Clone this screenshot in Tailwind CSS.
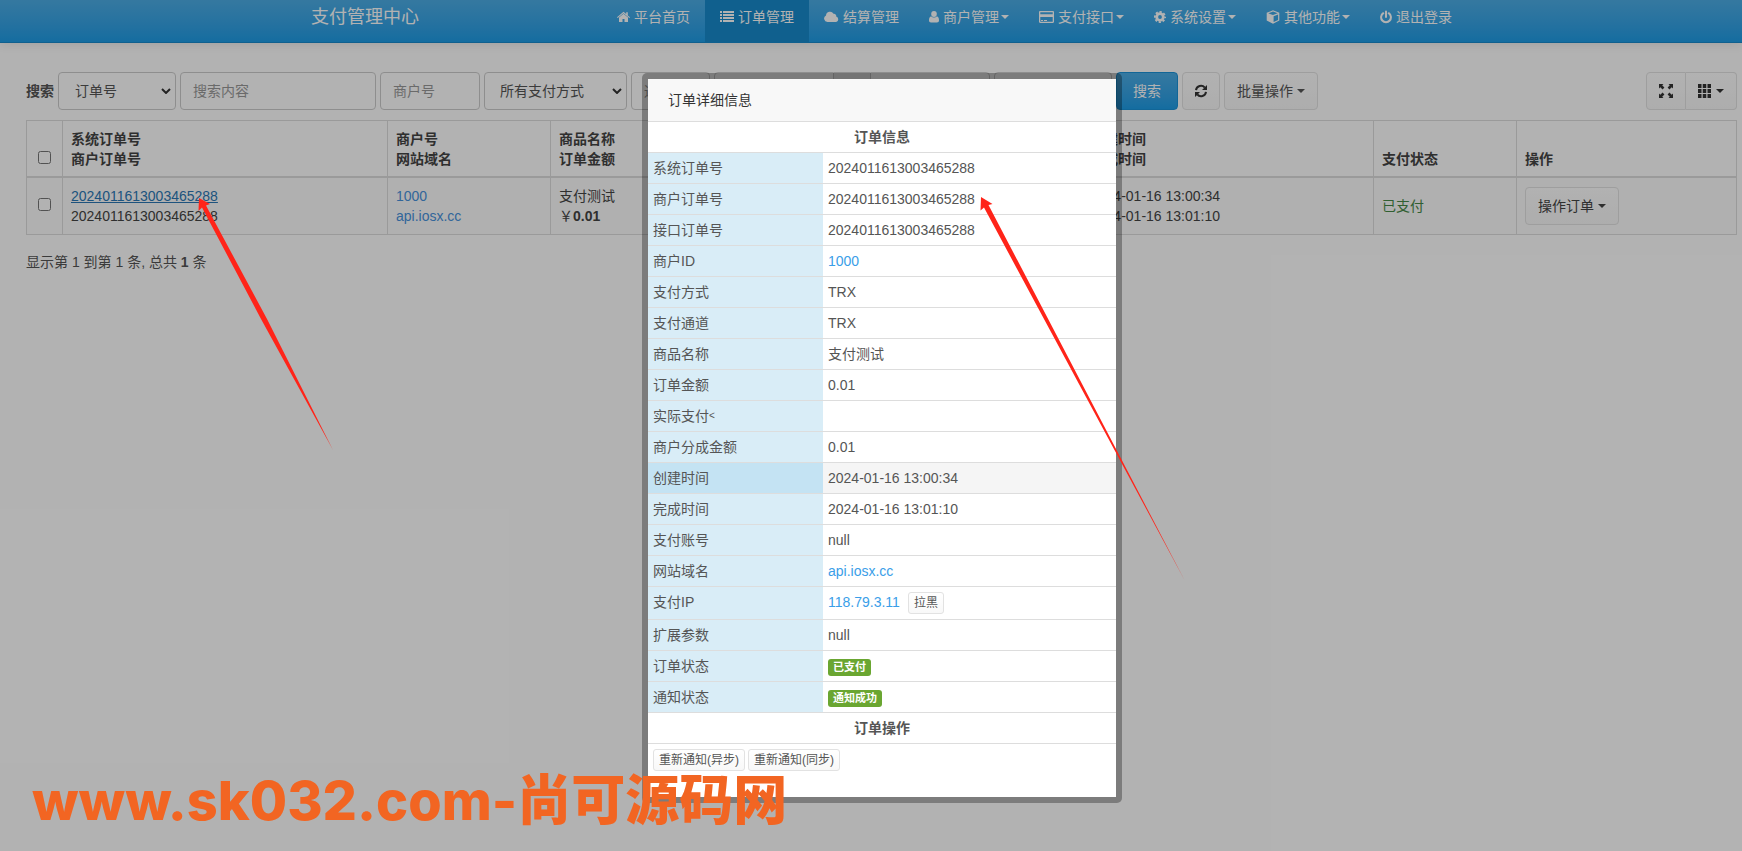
<!DOCTYPE html>
<html lang="zh-CN">
<head>
<meta charset="utf-8">
<meta name="viewport" content="width=device-width, initial-scale=1">
<title>支付管理中心</title>
<script src="https://cdn.jsdelivr.net/npm/@tailwindcss/browser@4"></script>
</head>
<body class="relative min-h-screen overflow-hidden bg-white font-['Liberation_Sans','Noto_Sans_CJK_SC',sans-serif] text-sm leading-5 text-[#555]">

<svg class="hidden" aria-hidden="true">
  <symbol id="caret" viewBox="0 0 8 4"><path d="M0 0h8L4 4z"/></symbol>
  <symbol id="chevron" viewBox="0 0 10 6"><path d="M1 1l4 4 4-4" fill="none" stroke="currentColor" stroke-width="2"/></symbol>
</svg>

<!-- Navigation bar -->
<header class="h-[43px] border-b border-[#178acc] bg-linear-to-b from-[#4cade6] to-[#1d9ce5] shadow-[0_1px_10px_rgba(0,0,0,0.1)]">
  <div class="mx-auto flex h-[42px] w-full max-w-[1192px] justify-between pl-9 text-white">
    <a href="#" class="pt-[7px] text-lg leading-5">支付管理中心</a>
    <nav class="flex whitespace-nowrap">
      <a href="#" class="flex h-[42px] items-center gap-1 px-[15px] pb-2"><svg class="h-3.5 w-[13px]" viewBox="0 0 13 14" fill="currentColor"><path d="M6.500 3.800L2 7.500V12h3.500V9h2v3H11V7.500z"/><path d="M6.500 1.800L9.200 4V2.300h1.600v3.100L13 7.200l-.7.800L6.500 3.200.7 8 0 7.200z"/></svg>平台首页</a>
      <a href="#" aria-current="page" class="flex h-[43px] items-center gap-1 bg-[#178acc] px-[15px] pb-[9px]"><svg class="h-3.5 w-3.5" viewBox="0 0 14 14" fill="currentColor"><path d="M0 1h2v2H0zM3 1h11v2H3zM0 4h2v2H0zM3 4h11v2H3zM0 7h2v2H0zM3 7h11v2H3zM0 10h2v2H0zM3 10h11v2H3z"/></svg>订单管理</a>
      <a href="#" class="flex h-[42px] items-center gap-1 px-[15px] pb-2"><svg class="h-3.5 w-[15px]" viewBox="0 0 15 14" fill="currentColor"><path d="M3.500 12A3.500 3.500 0 0 1 2 5.400 4 4 0 0 1 9.500 3.800 2.300 2.300 0 0 1 12.200 6.600 2.800 2.800 0 0 1 12.200 12z"/></svg>结算管理</a>
      <a href="#" class="flex h-[42px] items-center gap-1 px-[15px] pb-2"><svg class="h-3.5 w-2.5" viewBox="0 0 10 14" fill="currentColor"><ellipse cx="5" cy="4" rx="2.800" ry="3"/><path d="M2 6.200C.5 6.800 0 8.500 0 10.500 0 11.500.8 12.500 2 12.500h6c1.200 0 2-1 2-2 0-2-.5-3.700-2-4.300a4 4 0 0 1-6 0z"/></svg>商户管理<svg class="-ml-0.5 h-1 w-2" fill="currentColor"><use href="#caret"/></svg></a>
      <a href="#" class="flex h-[42px] items-center gap-1 px-[15px] pb-2"><svg class="h-3.5 w-[15px]" viewBox="0 0 15 14" fill="currentColor"><path fill-rule="evenodd" d="M1.200 1h12.600c.7 0 1.200.5 1.200 1.200v9.600c0 .7-.5 1.200-1.200 1.200H1.200C.5 13 0 12.500 0 11.800V2.200C0 1.500.5 1 1.200 1zM1.300 2.200v2.100h12.400V2.200zM1.300 7v4.800h12.400V7zM2 10h2v1H2zM5 10h3v1H5z"/></svg>支付接口<svg class="-ml-0.5 h-1 w-2" fill="currentColor"><use href="#caret"/></svg></a>
      <a href="#" class="flex h-[42px] items-center gap-1 px-[15px] pb-2"><svg class="h-3.5 w-3" viewBox="0 0 12 14"><circle cx="6" cy="7" r="3.300" fill="none" stroke="currentColor" stroke-width="2.800"/><circle cx="6" cy="7" r="5.100" fill="none" stroke="currentColor" stroke-width="1.800" stroke-dasharray="2.200 1.805" stroke-dashoffset="1.100"/></svg>系统设置<svg class="-ml-0.5 h-1 w-2" fill="currentColor"><use href="#caret"/></svg></a>
      <a href="#" class="flex h-[42px] items-center gap-1 px-[15px] pb-2"><svg class="h-3.5 w-3.5" viewBox="0 0 14 14" fill="currentColor"><path fill-rule="evenodd" d="M7 .3l6.300 2.500v7.700L7 13.700.7 10.500V2.800zM7 1.500L2.300 3.300 7 5.100l4.700-1.800zM7.600 6.200v5.900l4.500-2.200V4.500z"/></svg>其他功能<svg class="-ml-0.5 h-1 w-2" fill="currentColor"><use href="#caret"/></svg></a>
      <a href="#" class="flex h-[42px] items-center gap-1 px-[15px] pb-2"><svg class="h-3.5 w-3" viewBox="0 0 12 14" fill="none" stroke="currentColor" stroke-width="2" stroke-linecap="round"><path d="M3.300 3.200a4.900 4.900 0 1 0 5.400 0M6 1.500v5.500"/></svg>退出登录</a>
    </nav>
  </div>
</header>

<main class="px-[5px] pt-[29px] pl-[26px]">
  <!-- Search toolbar -->
  <form class="flex items-center gap-1 whitespace-nowrap">
    <label for="field" class="font-bold">搜索</label>
    <div class="relative w-[118px] shrink-0">
      <select id="field" class="h-[38px] w-full appearance-none rounded border border-[#ccc] bg-white px-4"><option>订单号</option></select>
      <svg class="pointer-events-none absolute top-4 right-[5px] h-1.5 w-2.5 text-[#333]"><use href="#chevron"/></svg>
    </div>
    <input type="text" aria-label="搜索内容" placeholder="搜索内容" class="h-[38px] w-[196px] shrink-0 rounded border border-[#ccc] bg-white px-3 placeholder:text-[#999]">
    <input type="text" aria-label="商户号" placeholder="商户号" class="h-[38px] w-[100px] shrink-0 rounded border border-[#ccc] bg-white px-3 placeholder:text-[#999]">
    <div class="relative w-[143px] shrink-0">
      <select aria-label="支付方式" class="h-[38px] w-full appearance-none rounded border border-[#ccc] bg-white px-[15px]"><option>所有支付方式</option></select>
      <svg class="pointer-events-none absolute top-4 right-[5px] h-1.5 w-2.5 text-[#333]"><use href="#chevron"/></svg>
    </div>
    <input type="text" aria-label="通道ID" placeholder="通道ID" class="h-[38px] w-[79px] shrink-0 rounded border border-[#ccc] bg-white px-3 placeholder:text-[#999]">
    <div class="flex w-[276px] shrink-0">
      <input type="text" aria-label="开始日期" class="h-[38px] min-w-0 flex-1 rounded-l border border-[#ccc] bg-white px-3">
      <span class="w-9 border-y border-[#ccc] bg-[#eee]"></span>
      <input type="text" aria-label="结束日期" class="h-[38px] min-w-0 flex-1 rounded-r border border-[#ccc] bg-white px-3">
    </div>
    <select aria-label="支付状态" class="h-[38px] w-[118px] shrink-0 appearance-none rounded border border-[#ccc] bg-white"></select>
    <button type="button" class="h-[38px] w-[62px] shrink-0 rounded border border-[#1b92d8] bg-linear-to-b from-[#4cade6] to-[#1d9ce5] text-white">搜索</button>
    <button type="button" aria-label="刷新" class="flex h-[38px] w-[38px] shrink-0 items-center justify-center rounded border border-[#e2e2e2] bg-linear-to-b from-white to-[#f8f8f8]"><svg class="h-3.5 w-3.5 text-[#333]" viewBox="0 0 14 14"><path d="M2 6.200A5 5 0 0 1 10.800 3.600M12 7.800A5 5 0 0 1 3.200 10.400" fill="none" stroke="currentColor" stroke-width="2"/><path d="M13 1v5H8zM1 13V8h5z" fill="currentColor"/></svg></button>
    <button type="button" class="flex h-[38px] w-[94px] shrink-0 items-center justify-center gap-1 rounded border border-[#e2e2e2] bg-linear-to-b from-white to-[#f8f8f8]">批量操作<svg class="h-1 w-2" fill="currentColor"><use href="#caret"/></svg></button>
    <div class="ml-auto flex">
      <button type="button" aria-label="全屏" class="flex h-[38px] w-10 items-center justify-center rounded-l border border-[#e2e2e2] bg-linear-to-b from-white to-[#f8f8f8] text-[#333]"><svg class="h-3.5 w-3.5" viewBox="0 0 14 14" fill="currentColor"><path d="M0 0h4.500L3.200 1.300l2.200 2.300-1.800 1.800L1.300 3.200 0 4.500zM14 0v4.500l-1.300-1.300-2.300 2.200-1.800-1.800 2.200-2.300L9.500 0zM0 14V9.500l1.300 1.300 2.300-2.200 1.800 1.800-2.200 2.300L4.500 14zM14 14H9.500l1.300-1.300-2.200-2.300 1.800-1.800 2.300 2.200L14 9.500z"/></svg></button>
      <button type="button" aria-label="列" class="flex h-[38px] w-[51px] items-center justify-center gap-[5px] rounded-r border border-l-0 border-[#e2e2e2] bg-linear-to-b from-white to-[#f8f8f8] text-[#333]"><svg class="h-3.5 w-[13px]" viewBox="0 0 13 14" fill="currentColor"><path d="M0 0h3.500v4H0zM4.750 0h3.500v4h-3.500zM9.500 0H13v4H9.500zM0 5h3.500v4H0zM4.750 5h3.500v4h-3.500zM9.500 5H13v4H9.500zM0 10h3.500v4H0zM4.750 10h3.500v4h-3.500zM9.500 10H13v4H9.500z"/></svg><svg class="h-1 w-2" fill="currentColor"><use href="#caret"/></svg></button>
    </div>
  </form>

  <!-- Order list -->
  <table class="mt-2.5 w-full table-fixed border-collapse text-left whitespace-nowrap text-[#444]">
    <colgroup><col class="w-9"><col class="w-[325px]"><col class="w-[163px]"><col class="w-[150px]"><col><col class="w-[292px]"><col class="w-[143px]"><col class="w-[220px]"></colgroup>
    <thead>
      <tr class="border-t border-b-2 border-[#ddd] align-bottom">
        <th class="border-x border-[#ddd] px-2 pt-2 pb-3"><input type="checkbox" aria-label="全选" class="ml-[3px] block size-[13px]"></th>
        <th class="border-x border-[#ddd] px-2 pt-2 pb-[7px]">系统订单号<br>商户订单号</th>
        <th class="border-x border-[#ddd] px-2 pt-2 pb-[7px]">商户号<br>网站域名</th>
        <th class="border-x border-[#ddd] px-2 pt-2 pb-[7px]">商品名称<br>订单金额</th>
        <th class="border-x border-[#ddd] px-2 pt-2 pb-[7px]"></th>
        <th class="border-x border-[#ddd] px-2 pt-2 pb-[7px]">创建时间<br>完成时间</th>
        <th class="border-x border-[#ddd] px-2 pt-2 pb-[7px]">支付状态</th>
        <th class="border-x border-[#ddd] px-2 pt-2 pb-[7px]">操作</th>
      </tr>
    </thead>
    <tbody>
      <tr class="border-b border-[#ddd] bg-[#fcfcfc]">
        <td class="border-x border-[#ddd] px-2 pt-2 pb-3"><input type="checkbox" aria-label="选择订单" class="ml-[3px] block size-[13px]"></td>
        <td class="border-x border-[#ddd] p-2"><a href="#" class="text-[#2b78b5] underline">2024011613003465288</a><br>2024011613003465288</td>
        <td class="border-x border-[#ddd] p-2"><a href="#" class="text-[#4892dd]">1000</a><br><a href="#" class="text-[#4892dd]">api.iosx.cc</a></td>
        <td class="border-x border-[#ddd] p-2">支付测试<br>￥<b>0.01</b></td>
        <td class="border-x border-[#ddd] p-2"></td>
        <td class="border-x border-[#ddd] p-2">2024-01-16 13:00:34<br>2024-01-16 13:01:10</td>
        <td class="border-x border-[#ddd] p-2 text-[#468847]">已支付</td>
        <td class="border-x border-[#ddd] px-2 py-0"><button type="button" class="flex h-[38px] w-[94px] items-center justify-center gap-1 rounded border border-[#e2e2e2] bg-linear-to-b from-white to-[#f8f8f8]">操作订单<svg class="h-1 w-2" fill="currentColor"><use href="#caret"/></svg></button></td>
      </tr>
    </tbody>
  </table>
  <p class="mt-[17px]">显示第 1 到第 1 条, 总共 <b>1</b> 条</p>
</main>

<div class="absolute inset-0 bg-black/30"></div>

<!-- Order details dialog -->
<section role="dialog" aria-labelledby="dialog-title" class="absolute top-[73px] left-[642px] w-[480px] rounded-[5px] bg-black/30 p-1.5">
  <div class="bg-white pb-[21px]">
    <h2 id="dialog-title" class="h-[42px] bg-[#f8f8f8] px-5 leading-[42px] text-[#333]">订单详细信息</h2>
    <table class="w-full table-fixed border-collapse">
      <colgroup><col class="w-[175px]"><col></colgroup>
      <tbody>
        <tr><th colspan="2" class="border-t border-[#ddd] p-[5px] font-bold">订单信息</th></tr>
        <tr><td class="border-t border-[#ddd] bg-[#d9edf7] p-[5px]">系统订单号</td><td class="border-t border-[#ddd] p-[5px]">2024011613003465288</td></tr>
        <tr><td class="border-t border-[#ddd] bg-[#d9edf7] p-[5px]">商户订单号</td><td class="border-t border-[#ddd] p-[5px]">2024011613003465288</td></tr>
        <tr><td class="border-t border-[#ddd] bg-[#d9edf7] p-[5px]">接口订单号</td><td class="border-t border-[#ddd] p-[5px]">2024011613003465288</td></tr>
        <tr><td class="border-t border-[#ddd] bg-[#d9edf7] p-[5px]">商户ID</td><td class="border-t border-[#ddd] p-[5px]"><a href="#" class="text-[#3a9ee8]">1000</a></td></tr>
        <tr><td class="border-t border-[#ddd] bg-[#d9edf7] p-[5px]">支付方式</td><td class="border-t border-[#ddd] p-[5px]">TRX</td></tr>
        <tr><td class="border-t border-[#ddd] bg-[#d9edf7] p-[5px]">支付通道</td><td class="border-t border-[#ddd] p-[5px]">TRX</td></tr>
        <tr><td class="border-t border-[#ddd] bg-[#d9edf7] p-[5px]">商品名称</td><td class="border-t border-[#ddd] p-[5px]">支付测试</td></tr>
        <tr><td class="border-t border-[#ddd] bg-[#d9edf7] p-[5px]">订单金额</td><td class="border-t border-[#ddd] p-[5px]">0.01</td></tr>
        <tr><td class="border-t border-[#ddd] bg-[#d9edf7] p-[5px]">实际支付<span class="align-[2px] text-[10px] leading-none">&lt;</span></td><td class="border-t border-[#ddd] p-[5px]"></td></tr>
        <tr><td class="border-t border-[#ddd] bg-[#d9edf7] p-[5px]">商户分成金额</td><td class="border-t border-[#ddd] p-[5px]">0.01</td></tr>
        <tr><td class="border-t border-[#ddd] bg-[#c4e3f3] p-[5px]">创建时间</td><td class="border-t border-[#ddd] bg-[#f5f5f5] p-[5px]">2024-01-16 13:00:34</td></tr>
        <tr><td class="border-t border-[#ddd] bg-[#d9edf7] p-[5px]">完成时间</td><td class="border-t border-[#ddd] p-[5px]">2024-01-16 13:01:10</td></tr>
        <tr><td class="border-t border-[#ddd] bg-[#d9edf7] p-[5px]">支付账号</td><td class="border-t border-[#ddd] p-[5px]">null</td></tr>
        <tr><td class="border-t border-[#ddd] bg-[#d9edf7] p-[5px]">网站域名</td><td class="border-t border-[#ddd] p-[5px]"><a href="#" class="text-[#3a9ee8]">api.iosx.cc</a></td></tr>
        <tr class="align-top"><td class="border-t border-[#ddd] bg-[#d9edf7] p-[5px]">支付IP</td><td class="border-t border-[#ddd] p-[5px]"><div class="flex items-start gap-2"><a href="#" class="text-[#3a9ee8]">118.79.3.11</a><button type="button" class="h-[22px] rounded-[3px] border border-[#e2e2e2] bg-linear-to-b from-white to-[#f8f8f8] px-[5px] text-xs">拉黑</button></div></td></tr>
        <tr><td class="border-t border-[#ddd] bg-[#d9edf7] p-[5px]">扩展参数</td><td class="border-t border-[#ddd] p-[5px]">null</td></tr>
        <tr><td class="border-t border-[#ddd] bg-[#d9edf7] p-[5px]">订单状态</td><td class="border-t border-[#ddd] px-[5px] pt-0.5"><span class="block h-[17px] w-fit rounded-[3px] bg-[#6aa631] px-[5px] text-[11px] leading-[17px] font-bold text-white">已支付</span></td></tr>
        <tr><td class="border-t border-[#ddd] bg-[#d9edf7] p-[5px]">通知状态</td><td class="border-t border-[#ddd] px-[5px] pt-0.5"><span class="block h-[17px] w-fit rounded-[3px] bg-[#6aa631] px-[5px] text-[11px] leading-[17px] font-bold text-white">通知成功</span></td></tr>
        <tr><th colspan="2" class="border-t border-[#ddd] p-[5px] font-bold">订单操作</th></tr>
        <tr><td colspan="2" class="border-t border-[#ddd] p-[5px]"><div class="flex gap-[3px]"><button type="button" class="h-[22px] rounded-[3px] border border-[#e2e2e2] bg-linear-to-b from-white to-[#f8f8f8] px-[5px] text-xs">重新通知(异步)</button><button type="button" class="h-[22px] rounded-[3px] border border-[#e2e2e2] bg-linear-to-b from-white to-[#f8f8f8] px-[5px] text-xs">重新通知(同步)</button></div></td></tr>
      </tbody>
    </table>
  </div>
</section>

<!-- Annotation arrows -->
<svg class="pointer-events-none absolute inset-0 h-full w-full" fill="#ff2419" aria-hidden="true">
  <path d="M199 198l11 6-4 1.500L267 319 333 450 261 319 202 207.500 198.500 211z"/>
  <path d="M981 197l11.500 7-4 1L1185 581 984 207.500 980.500 210.500z"/>
</svg>

<!-- Watermark -->
<p class="pointer-events-none absolute bottom-[20px] left-[32px] flex items-baseline leading-[60px] whitespace-nowrap text-[#f26522]"><span class="font-['Inter',sans-serif] text-[54px] font-extrabold">www.sk032.com-</span><span class="text-[54px] font-black">尚可源码网</span></p>
</body>
</html>
